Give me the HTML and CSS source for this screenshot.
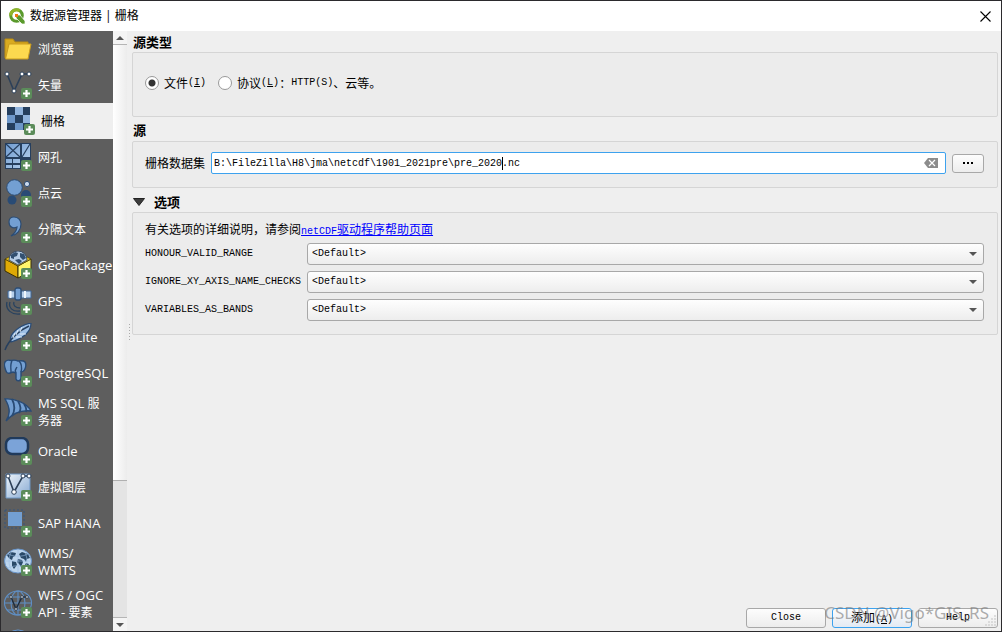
FILE: index.html
```html
<!DOCTYPE html>
<html lang="zh-CN">
<head>
<meta charset="utf-8">
<title>数据源管理器 | 栅格</title>
<link rel="stylesheet" href="styles.css">
</head>
<body>
<svg class="defs" aria-hidden="true">
  <defs>
    <linearGradient id="blue" x1="0" y1="0" x2="1" y2="1"><stop offset="0" stop-color="#6f9bd0"/><stop offset="1" stop-color="#b9d3ee"/></linearGradient>
    <linearGradient id="pale" x1="0" y1="0" x2="1" y2="1"><stop offset="0" stop-color="#eef4fa"/><stop offset="1" stop-color="#86a9d2"/></linearGradient>
    <g id="plus"><rect x="17" y="17" width="11" height="11" rx="2" fill="#5b8c5a"/><path d="M22.500 19v7M19 22.500h7" stroke="#fff" stroke-width="2.200"/></g>
  </defs>
</svg>
<div class="window">
  <header class="titlebar">
    <svg class="logo" viewBox="0 0 16 16"><circle cx="7.500" cy="7.500" r="5.800" fill="none" stroke="#5a9a2c" stroke-width="3"/><path d="M1.700 7.500a5.800 5.800 0 0 1 9-4.800" fill="none" stroke="#8fb52a" stroke-width="3"/><path d="M7 7h4l5 6v3h-3L7 10z" fill="#5a9a2c" stroke="#fff" stroke-width=".7"/><path d="M6 6h3v3H6z" fill="#ee7913"/></svg>
    <h1>数据源管理器 | 栅格</h1>
    <button class="close" aria-label="关闭"><svg viewBox="0 0 11 11"><path d="M.5.5l10 10M10.500.5l-10 10" stroke="#000" stroke-width="1.100"/></svg></button>
  </header>
  <div class="body">
    <nav class="sources">
      <button class="item"><svg viewBox="0 0 28 28"><path d="M1 23V4h8l2 3h13v4" fill="#d9aa20" stroke="#b98b12"/><path d="M5 9h22l-3 15H1.500z" fill="#fcd94f" stroke="#c99b1d"/></svg><span class="zh">浏览器</span></button>
      <button class="item"><svg viewBox="0 0 28 28"><path d="M3 3l7 17 8-17h7" fill="none" stroke="#2c4059" stroke-width="1.600"/><g fill="#fff" stroke="#2c4059"><circle cx="3" cy="3" r="2"/><circle cx="10" cy="20" r="2"/><circle cx="18" cy="3" r="2"/><circle cx="25" cy="3" r="2"/></g><use href="#plus"/></svg><span class="zh">矢量</span></button>
      <button class="item selected"><svg viewBox="0 0 28 28"><path d="M0 0h23v23H0z" fill="#6d97c9"/><path d="M0 0h8v8H0zM16 0h7v8h-7zM8 8h8v8H8zM0 16h8v7H0z" fill="#253f5e"/><path d="M8 0h8v8H8zM16 8h7v8h-7z" fill="#90b3dc"/><path d="M16 16h7v7h-7z" fill="#253f5e"/><use href="#plus"/></svg><span class="zh">栅格</span></button>
      <button class="item"><svg viewBox="0 0 28 28"><path d="M1 0h26v26H1z" fill="#263f5e"/><path d="M2 1h14v13H2zM18 1h8v13h-8zM2 16h6v4H2zM9 16h7v4H9zM2 22h6v3H2zM9 22h7v3H9z" fill="url(#blue)"/><path d="M2 1l14 13M16 1L2 14M26 1L18 14" stroke="#263f5e" stroke-width="1.200"/><use href="#plus"/></svg><span class="zh">网孔</span></button>
      <button class="item"><svg viewBox="0 0 28 28"><circle cx="10.500" cy="8.500" r="7.800" fill="#739fd2" stroke="#2c4c73"/><circle cx="23" cy="5" r="2.600" fill="#c9d8ed" stroke="#2c4c73"/><circle cx="8" cy="21" r="4.500" fill="#294b75"/><circle cx="22" cy="16" r="5" fill="#294b75"/><use href="#plus"/></svg><span class="zh">点云</span></button>
      <button class="item"><svg viewBox="0 0 28 28"><path d="M10 2c5 0 7 4 7 7 0 6-4 11-10 12 4-3 6-5 6-9-4 2-8 0-8-5 0-3 2-5 5-5z" fill="#739fd2" stroke="#2c4c73" stroke-width="1.200"/><use href="#plus"/></svg><span class="zh">分隔文本</span></button>
      <button class="item"><svg viewBox="0 0 28 28"><path d="M1 8l13 7v12L1 20z" fill="#dfaa05" stroke="#3b3005"/><path d="M27 8l-13 7v12l13-7z" fill="#fff66b" stroke="#3b3005"/><path d="M1 8l6-3h14l6 3-13 7z" fill="#e4bd1b" stroke="#3b3005" stroke-width=".6"/><path d="M5 9a9 9 0 1 1 18 0l-9 5z" fill="#b7cde5" stroke="#283f5a" stroke-width=".8"/><path d="M7 4l4-3 3 1-1 3-3 1v2l-3-1zM16 2l4 1 2 4-3 2-3-3zM11 9l4-1 3 2-3 3z" fill="#335070"/><use href="#plus"/></svg>GeoPackage</button>
      <button class="item"><svg viewBox="0 0 28 28"><path d="M4 4h7v7H4zM17 4h10v7H17z" fill="#b7cfea" stroke="#3e6797"/><path d="M6.500 4v7M21 4v7" stroke="#eef5fc" stroke-width="2"/><rect x="11" y="1" width="6" height="12" rx="2" fill="#739fd2" stroke="#2c4c73" stroke-width="1.300"/><path d="M10 15c-1 3 1 6 6 6M6 15c-2 6 3 10 10 9M3 15c-2 8 5 13 13 12" fill="none" stroke="#28425f" stroke-width="1.300"/><use href="#plus"/></svg>GPS</button>
      <button class="item"><svg viewBox="0 0 28 28"><path d="M27 0c0 8-7 15-20 19C4 12 14 3 27 0z" fill="#9dbfe5" stroke="#294b75" stroke-width="1.200"/><path d="M25 3C16 7 5 16 1 27" fill="none" stroke="#263f5e" stroke-width="1.500"/><path d="M9 15l2-5M12 12l2-5M16 9l2-5M12 14h6M16 11h6" stroke="#e6f0fa" stroke-width=".9"/><use href="#plus"/></svg>SpatiaLite</button>
      <button class="item"><svg viewBox="0 0 28 28"><path d="M7 1.500C2 0-1 3 1 9c1 4 2 6 5 5l3-1 3 1v6c1 3 5 2 5-1v-6c4 0 6-7 4-10-2-2-5-1-7-1-2-1-5-1-7-.5z" fill="#739fd2" stroke="#294b75" stroke-width="1.400"/><path d="M8 2c-2 3-1 7-1 11M15 2c3 3 3 7 2 11M12 14c-2-3 0-4 1-6" fill="none" stroke="#294b75" stroke-width="1.400"/><use href="#plus"/></svg>PostgreSQL</button>
      <button class="item double"><svg viewBox="0 0 28 28"><path d="M1 1c9-1 22 4 26 12-9-1-18 2-25 10 5-7 4-14-1-22z" fill="#739fd2" stroke="#294b75" stroke-width="1.400"/><path d="M8 1c3 6 3 12 0 17M14 3c3 5 3 9 1 12M20 6c2 3 3 5 2 8" fill="none" stroke="#294b75" stroke-width="1.800"/><use href="#plus"/></svg><span>MS SQL <span class="zh">服<br>务器</span></span></button>
      <button class="item"><svg viewBox="0 0 28 28"><rect x="2" y="1" width="22" height="16" rx="6" fill="#7ba3d8" stroke="#203a5b" stroke-width="2.500"/><use href="#plus"/></svg>Oracle</button>
      <button class="item"><svg viewBox="0 0 28 28"><path d="M2 1h24v24H2z" fill="url(#pale)" stroke="#6f97c4"/><path d="M4 3l6 16 9-16h5" fill="none" stroke="#2c4059" stroke-width="1.600"/><g fill="#fff" stroke="#2c4059"><circle cx="4" cy="3" r="2"/><circle cx="10" cy="19" r="2.300"/><circle cx="19" cy="3" r="2"/><circle cx="25" cy="3" r="2"/></g><use href="#plus"/></svg><span class="zh">虚拟图层</span></button>
      <button class="item"><svg viewBox="0 0 28 28"><path d="M1 1h19v18H1z" fill="none" stroke="#34547c" stroke-dasharray="2 2"/><path d="M4 3h14v14H4z" fill="#739fd2"/><use href="#plus"/></svg>SAP HANA</button>
      <button class="item double"><svg viewBox="0 0 28 28"><ellipse cx="14" cy="13" rx="13.500" ry="12" fill="#bcd5ee" stroke="#6794c9"/><path d="M3 7l4-3 5 1-1 3-2 1-1 3-2-1-2-2zM8 13l4 1 1 3-3 4-2-3zM15 6l3-2 6 2 2 4-3 1-1 3-2-3-3-1zM14 11l4 1 1 2-2 5-2-3-2-2zM22 15l3 1-1 2-3-1z" fill="#294968"/><path d="M1 13h26M14 1v24M4 6c6 3 14 3 20 0M4 20c6-3 14-3 20 0M8 3c-4 6-4 14 0 20M20 3c4 6 4 14 0 20" fill="none" stroke="#9abce0" stroke-width=".6"/><use href="#plus"/></svg><span>WMS/<br>WMTS</span></button>
      <button class="item double"><svg viewBox="0 0 28 28"><g fill="none" stroke="#5f8fc5" stroke-width="1.100"><ellipse cx="14" cy="13" rx="13.500" ry="12"/><ellipse cx="14" cy="13" rx="7" ry="12"/><path d="M1 13h26M14 1v24M3 7h22M3 20h22"/></g><path d="M7 7l5 12 6-12h5" fill="none" stroke="#1d2c3e" stroke-width="1.400"/><g fill="#fff" stroke="#1d2c3e" stroke-width=".8"><circle cx="7" cy="7" r="1.300"/><circle cx="12" cy="19" r="1.300"/><circle cx="18" cy="7" r="1.300"/><circle cx="23" cy="7" r="1.300"/></g><use href="#plus"/></svg><span>WFS / OGC<br>API - <span class="zh">要素</span></span></button>
      <button class="item" aria-label="WCS"><svg viewBox="0 0 28 28"><ellipse cx="14" cy="13" rx="13" ry="12" fill="#294968" stroke="#6794c9"/></svg></button>
    </nav>
    <div class="scroll" aria-hidden="true">
      <span class="arrow up"></span><span class="thumb"></span><span class="track"></span><span class="arrow down"></span>
    </div>
    <div class="grip" aria-hidden="true"></div>
    <main class="main">
      <h2>源类型</h2>
      <section class="group types">
        <label><input type="radio" name="type" checked>文件<span class="en">(<u>I</u>)</span></label>
        <label><input type="radio" name="type">协议<span class="en">(<u>L</u>)</span>：<span class="en">HTTP(S)</span>、云等。</label>
      </section>
      <h2>源</h2>
      <section class="group source">
        <label for="path">栅格数据集</label>
        <div class="field">
          <input id="path" type="text" value="B:\FileZilla\H8\jma\netcdf\1901_2021pre\pre_2020.nc">
          <span class="caret"></span>
          <button class="clear" aria-label="清除"><svg viewBox="0 0 14 10"><path d="M4 0h10v10H4L0 5z" fill="#8c8c8c"/><path d="M5 2l6 6M11 2L5 8" stroke="#fff" stroke-width="1.200"/></svg></button>
        </div>
        <button class="btn browse" aria-label="浏览"><svg viewBox="0 0 10 2"><path d="M0 0h2v2H0zM4 0h2v2H4zM8 0h2v2H8z"/></svg></button>
      </section>
      <h2 class="fold"><svg viewBox="0 0 12 8"><path d="M.5.5h11L6 7.500z" fill="#3c3c3c" stroke="#222"/></svg>选项</h2>
      <section class="group options">
        <p>有关选项的详细说明，请参阅<a href="#"><span class="en">netCDF</span>驱动程序帮助页面</a></p>
        <label class="en" for="o1">HONOUR_VALID_RANGE</label>
        <div class="pick"><select id="o1"><option>&lt;Default&gt;</option></select></div>
        <label class="en" for="o2">IGNORE_XY_AXIS_NAME_CHECKS</label>
        <div class="pick"><select id="o2"><option>&lt;Default&gt;</option></select></div>
        <label class="en" for="o3">VARIABLES_AS_BANDS</label>
        <div class="pick"><select id="o3"><option>&lt;Default&gt;</option></select></div>
      </section>
      <footer class="actions">
        <button class="btn en">Close</button>
        <button class="btn primary">添加<span class="en">(<u>A</u>)</span></button>
        <button class="btn en">Help</button>
        <svg class="sizer" viewBox="0 0 12 12"><path d="M9 1h2M6 4h2M9 4h2M3 7h2M6 7h2M9 7h2M0 10h2M3 10h2M6 10h2M9 10h2" stroke="#c4c4c4" stroke-width="1.200"/></svg>
        <span class="watermark">CSDN @Vigo*GIS_RS</span>
      </footer>
    </main>
  </div>
</div>
</body>
</html>
```

FILE: styles.css
```css
* { box-sizing: border-box; }

body {
  margin: 0;
  font: 12px/16px "Noto Sans CJK SC", sans-serif;
  color: #000;
}

button, input, select { font: inherit; color: inherit; margin: 0; }
h1, h2, p { margin: 0; }
.defs { position: absolute; width: 0; height: 0; }

.en { font-family: "Liberation Mono", monospace; font-size: 10px; }

.window {
  display: flex;
  flex-direction: column;
  height: 100vh;
  border: 1px solid #2b2a2d;
  background: #efefef;
  overflow: hidden;
}

.titlebar {
  flex: none;
  display: flex;
  align-items: center;
  gap: 5px;
  height: 30px;
  padding: 0 10px 0 8px;
  background: #fff;
}
.logo { width: 16px; height: 16px; }
.titlebar h1 {
  flex: 1;
  font: 12px/16px "Open Sans", "Noto Sans CJK SC", sans-serif;
}
.close { border: 0; padding: 0; background: none; display: flex; }
.close svg { width: 11px; height: 11px; }

.body { flex: 1; display: flex; min-height: 0; }

.sources {
  flex: none;
  width: 112px;
  overflow: hidden;
  background: #5e5e5e;
}
.item {
  display: flex;
  align-items: center;
  gap: 6px;
  width: 100%;
  height: 36px;
  padding: 0 0 0 3px;
  border: 0;
  background: none;
  color: #fff;
  font: 13px/17px "Open Sans", "Noto Sans CJK SC", sans-serif;
  text-align: left;
  white-space: nowrap;
}
.item.double { height: 42px; }
.item.selected { background: #efefef; color: #000; padding-left: 6px; }
.item svg { flex: none; width: 28px; height: 28px; }
.item .zh { font-size: 12px; }

.scroll {
  flex: none;
  display: flex;
  flex-direction: column;
  width: 14px;
  background: #f4f4f4;
}
.arrow { flex: none; height: 14px; display: flex; justify-content: center; align-items: center; }
.arrow::before { content: ""; border: 4px solid transparent; }
.up { border-bottom: 1px solid #b5b5b5; }
.up::before { border-top: 0; border-bottom-color: #555; }
.down { border-top: 1px solid #b5b5b5; }
.down::before { border-bottom: 0; border-top-color: #555; }
.thumb { flex: 436; background: linear-gradient(90deg, #fff, #ececec); border-bottom: 1px solid #b0b0b0; }
.track { flex: 136; background: #e4e4e4; }

.grip {
  flex: none;
  align-self: center;
  width: 5px;
  height: 17px;
  background: radial-gradient(circle, #aaa 1px, transparent 1px) 0 0 / 5px 3px;
}

.main {
  flex: 1;
  display: flex;
  flex-direction: column;
  min-width: 0;
  padding: 2px 3px 3px 0;
}
h2 { height: 19px; padding-left: 1px; font-size: 13px; line-height: 18px; font-weight: 700; }
.group + h2 { height: 24px; padding-top: 4px; }
.fold { display: flex; align-items: center; gap: 9px; }
.fold svg { width: 12px; height: 8px; }

.group {
  display: flex;
  align-items: center;
  padding: 0 13px 0 12px;
  border: 1px solid #d5d5d5;
  border-radius: 2px;
  background: #ececec;
}

.types { height: 65px; gap: 12px; padding-bottom: 3px; }
.types label { display: flex; align-items: center; }
.types input {
  appearance: none;
  width: 14px;
  height: 14px;
  margin-right: 5px;
  border: 1px solid #999;
  border-radius: 50%;
  background: #fff;
}
.types input:checked { background: radial-gradient(circle, #333 3px, #fff 4px); }

.source { height: 47px; padding-bottom: 3px; }
.field { position: relative; flex: 1; margin: 0 6px; }
.field input {
  display: block;
  width: 100%;
  height: 22px;
  padding: 0 30px 0 2px;
  border: 1px solid #3da2ee;
  border-radius: 2px;
  background: #fff;
  font: 10px/20px "Liberation Mono", monospace;
  outline: 0;
}
.caret { position: absolute; left: 291px; top: 5px; width: 1px; height: 13px; background: #000; }
.clear { position: absolute; right: 8px; top: 6px; display: flex; padding: 0; border: 0; background: none; }
.clear svg { width: 14px; height: 10px; }

.btn {
  padding: 0;
  border: 1px solid #a8a8a8;
  border-radius: 3px;
  background: linear-gradient(#fdfdfd, #ededed);
}
.browse { display: flex; align-items: center; justify-content: center; width: 32px; height: 19px; }
.browse svg { width: 10px; height: 2px; }

.options {
  display: grid;
  grid-template-columns: 156px 1fr;
  gap: 6px;
  padding-top: 8px;
  padding-bottom: 13px;
}
.options p { grid-column: 1 / -1; margin-bottom: -3px; }
.options label { white-space: nowrap; }
a { color: #00f; }
.pick { position: relative; }
.pick::after {
  content: "";
  position: absolute;
  right: 7px;
  top: 9px;
  border: 4px solid transparent;
  border-bottom: 0;
  border-top-color: #555;
}
.pick select {
  appearance: none;
  display: block;
  width: 100%;
  height: 22px;
  padding: 0 20px 0 4px;
  border: 1px solid #a8a8a8;
  border-radius: 3px;
  background: linear-gradient(#fefefe, #ededed);
  font: 10px/20px "Liberation Mono", monospace;
}

.actions {
  position: relative;
  display: flex;
  justify-content: flex-end;
  gap: 6px;
  margin-top: auto;
}
.actions .btn { width: 80px; height: 20px; }
.actions .primary { border-color: #3da2ee; background: linear-gradient(#fdfdfd, #e4eaf3); }
.sizer { position: absolute; right: 1px; bottom: 1px; width: 12px; height: 12px; }
.watermark {
  position: absolute;
  right: 9px;
  bottom: 5px;
  font: 17px/20px "Noto Sans", sans-serif;
  color: #7779;
  white-space: nowrap;
  pointer-events: none;
}
```
